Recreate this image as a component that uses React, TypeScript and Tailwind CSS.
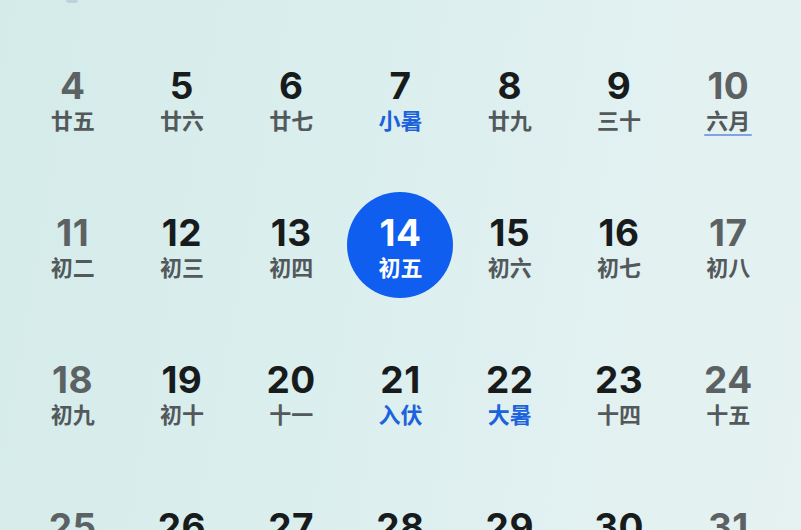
import React from "react";

type Day = { d: number; l: string; weekend?: boolean; blue?: boolean; today?: boolean; underline?: boolean };

const rows: Day[][] = [
  [
    { d: 4, l: "廿五", weekend: true },
    { d: 5, l: "廿六" },
    { d: 6, l: "廿七" },
    { d: 7, l: "小暑", blue: true },
    { d: 8, l: "廿九" },
    { d: 9, l: "三十" },
    { d: 10, l: "六月", weekend: true, underline: true },
  ],
  [
    { d: 11, l: "初二", weekend: true },
    { d: 12, l: "初三" },
    { d: 13, l: "初四" },
    { d: 14, l: "初五", today: true },
    { d: 15, l: "初六" },
    { d: 16, l: "初七" },
    { d: 17, l: "初八", weekend: true },
  ],
  [
    { d: 18, l: "初九", weekend: true },
    { d: 19, l: "初十" },
    { d: 20, l: "十一" },
    { d: 21, l: "入伏", blue: true },
    { d: 22, l: "大暑", blue: true },
    { d: 23, l: "十四" },
    { d: 24, l: "十五", weekend: true },
  ],
  [
    { d: 25, l: "十六", weekend: true },
    { d: 26, l: "十七" },
    { d: 27, l: "十八" },
    { d: 28, l: "十九" },
    { d: 29, l: "二十" },
    { d: 30, l: "廿一" },
    { d: 31, l: "廿二", weekend: true },
  ],
];

function Cell({ day, last }: { day: Day; last: boolean }) {
  const numColor = day.today ? "text-white" : day.weekend ? "text-[#5c6264]" : "text-[#171b1c]";
  const lunarColor = day.today ? "text-white" : day.blue ? "text-[#1b62dc]" : "text-[#53595b]";
  return (
    <div className="relative flex flex-col items-center">
      {day.today && (
        <div className="absolute left-1/2 top-[-23px] h-[106px] w-[106px] -translate-x-1/2 rounded-full bg-[#0f5ef0]" />
      )}
      <div
        className={`relative text-[37px] leading-[36px] font-bold tracking-[0.5px] ${numColor}`}
        style={{ fontFamily: "Inter, Roboto, sans-serif" }}
      >
        {day.d}
      </div>
      {!last && (
        <div
          className={`relative mt-[4px] text-[22px] leading-[22px] font-semibold ${lunarColor}`}
          style={{ fontFamily: "'Noto Sans CJK SC', sans-serif" }}
        >
          {day.l}
        </div>
      )}
      {day.underline && <div className="relative mt-[4px] h-[2px] w-[48px] rounded-full bg-[#7fa3e6]" />}
    </div>
  );
}

export default function App() {
  return (
    <div className="relative h-[530px] w-[801px] overflow-hidden bg-[linear-gradient(100deg,#d5ebea_0%,#d9eeed_35%,#e1f0f0_70%,#e6f2f2_100%)]">
      <div className="absolute left-[66px] top-[-3px] h-[6px] w-[12px] rounded-full bg-[#a9c4d0] opacity-60" />
      <div className="px-[18px] pt-[68px]">
        {rows.map((r, i) => (
          <div key={i} className="grid h-[147px] grid-cols-7">
            {r.map((d) => (
              <Cell key={d.d} day={d} last={i === rows.length - 1} />
            ))}
          </div>
        ))}
      </div>
    </div>
  );
}
